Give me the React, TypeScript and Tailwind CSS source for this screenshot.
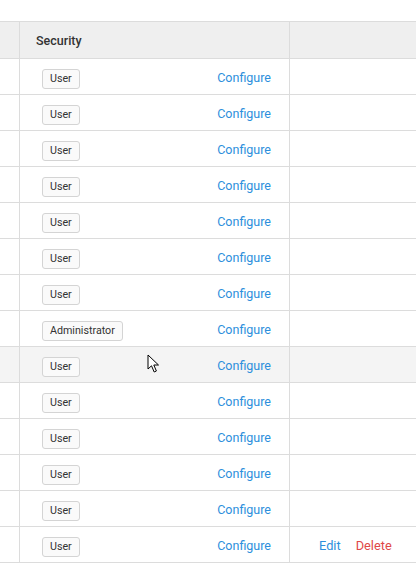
// 권한 목록 테이블 — Security 컬럼 + 행 액션
const roles = [
  'User', 'User', 'User', 'User', 'User', 'User', 'User',
  'Administrator', 'User', 'User', 'User', 'User', 'User', 'User',
]

function Cursor() {
  return (
    <svg
      className="pointer-events-none absolute left-[147px] top-[354px]"
      width="14"
      height="20"
      viewBox="0 0 14 20"
    >
      <path
        d="M1 1 L1 15 L4.5 11.8 L7.2 18 L9.4 17 L6.8 11 L11.5 11 Z"
        fill="#fff"
        stroke="#000"
        strokeWidth="1"
        strokeLinejoin="round"
      />
    </svg>
  )
}

export default function App() {
  return (
    <div
      className="relative h-[583px] w-[416px] overflow-hidden bg-white pt-[21px] text-[#333]"
      style={{ fontFamily: 'Roboto, "Liberation Sans", sans-serif' }}
    >
      {/* 헤더 */}
      <div className="flex h-[38px] border-y border-[#dcdcdc] bg-[#efefef]">
        <div className="w-[20px] shrink-0 border-r border-[#dcdcdc]" />
        <div className="flex w-[270px] shrink-0 items-center border-r border-[#dcdcdc] pl-[16px] pt-[2px] text-[12.5px] font-medium text-[#333]">
          Security
        </div>
        <div className="flex-1" />
      </div>

      {/* 행 */}
      {roles.map((r, i) => (
        <div
          key={i}
          className={
            i === 8
              ? 'flex h-[36px] border-b border-[#dcdcdc] bg-[#f4f4f4]'
              : 'flex h-[36px] border-b border-[#dcdcdc] bg-white'
          }
        >
          <div className="w-[20px] shrink-0 border-r border-[#dcdcdc]" />
          <div className="flex w-[270px] shrink-0 items-center justify-between border-r border-[#dcdcdc] pl-[22px] pr-[18px] pt-[3px]">
            <span className="mt-[2px] flex h-[20px] items-center rounded-[3px] border border-[#d4d4d4] bg-[#fafafa] px-[7px] text-[10.7px] text-[#333]">
              {r}
            </span>
            <a className="text-[12.5px] text-[#2d8fdc]">Configure</a>
          </div>
          <div className="flex flex-1 items-center gap-[15px] pl-[29px] pt-[3px] text-[12.8px]">
            {i === roles.length - 1 && (
              <>
                <a className="text-[#2d8fdc]">Edit</a>
                <a className="text-[#e04848]">Delete</a>
              </>
            )}
          </div>
        </div>
      ))}

      <Cursor />
    </div>
  )
}
